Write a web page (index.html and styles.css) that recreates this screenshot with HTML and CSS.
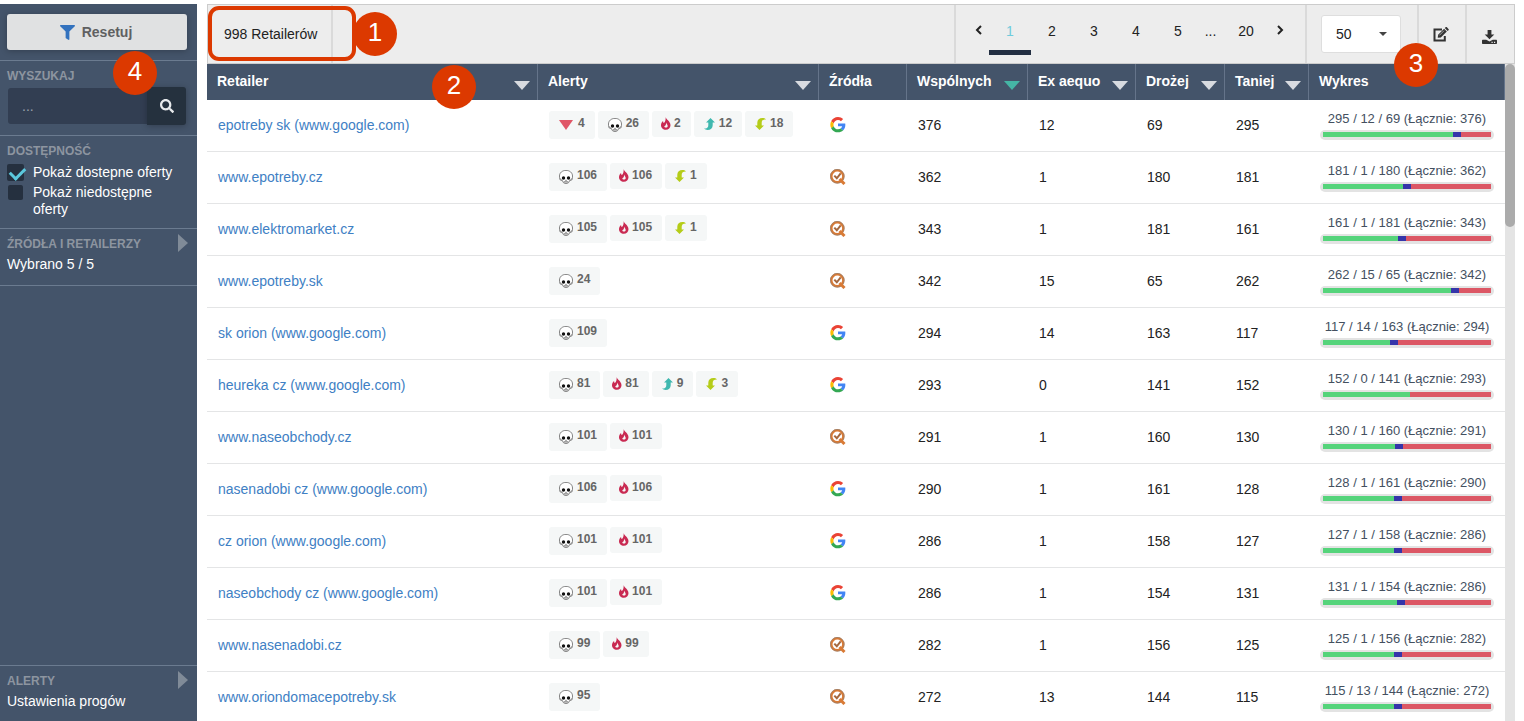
FILE: index.html
```html
<!DOCTYPE html>
<html lang="pl">
<head>
  <meta charset="utf-8">
  <title>Retailerzy</title>
  <link rel="stylesheet" href="styles.css">
</head>
<body>
  <svg class="sprite" aria-hidden="true">
    <symbol id="i-skull" viewBox="0 0 14 14">
      <path d="M7 .4C3.200.4.5 2.800.5 6c0 1.700.1 3.300.9 4.100.5.5 1.800.2 2.300.8.4.5.2 1.300.7 1.700.7.6 1.600.9 2.600.9s1.900-.3 2.600-.9c.5-.4.3-1.200.7-1.700.5-.6 1.800-.3 2.300-.8.8-.8.9-2.400.9-4.100C13.500 2.800 10.800.4 7 .4z" fill="#fff" stroke="#666" stroke-width=".8"/>
      <path d="M1.200 8.300c.2 1.300.8 1.700 2.300 1.800M12.800 8.300c-.2 1.300-.8 1.700-2.300 1.800" fill="none" stroke="#777" stroke-width=".9"/>
      <circle cx="4.500" cy="8" r="1.700" fill="#111"/>
      <circle cx="9.500" cy="8" r="1.700" fill="#111"/>
      <path d="M6.300 10.700L7 9.400l.7 1.300z" fill="#111"/>
      <path d="M4.900 11.900h4.200" stroke="#555" stroke-width=".9"/>
    </symbol>
    <symbol id="i-drop" viewBox="0 0 14 14">
      <path d="M0 2h14L7 12z" fill="#e05667"/>
    </symbol>
    <symbol id="i-fire" viewBox="0 0 10 13">
      <path d="M4.600 0c.5 2.600 4.900 4.300 4.900 8.200 0 2.600-2 4.600-4.700 4.600S0 10.800 0 8.300c0-2 .9-3.400 2.100-4.400 0 1 .2 1.800.8 2.200C4.300 4.700 4.900 2.400 4.600 0z" fill="#c92a52"/>
      <path d="M5 5.500c.2 1.300 1.700 1.900 1.700 3.400 0 1-.8 1.700-1.800 1.700-.9 0-1.600-.5-1.600-1.400 1.300-.2 2-1.800 1.700-3.700z" fill="#f6f7f7"/>
    </symbol>
    <symbol id="i-up" viewBox="0 0 11 12">
      <path d="M6.500 0L11 4.500H8.700v2.700C8.700 10.400 6.600 12 3.600 12 2.200 12 .9 11.500 0 10.600c2.800.1 4.300-1 4.300-3.400V4.500H2z" fill="#3fb8af"/>
    </symbol>
    <symbol id="i-down" viewBox="0 0 11 12">
      <path d="M4.500 12L0 7.500h2.300V4.800C2.300 1.600 4.400 0 7.400 0c1.400 0 2.700.5 3.600 1.400-2.800-.1-4.300 1-4.300 3.400v2.700H9z" fill="#b5cc18"/>
    </symbol>
    <symbol id="i-google" viewBox="-1 0 50 50">
      <path fill="#ea4335" d="M24 9.500c3.540 0 6.710 1.220 9.210 3.600l6.850-6.850C35.900 2.380 30.470 0 24 0 14.620 0 6.510 5.380 2.560 13.220l7.980 6.190C12.430 13.720 17.740 9.500 24 9.500z"/>
      <path fill="#4285f4" d="M46.980 24.550c0-1.570-.15-3.090-.38-4.550H24v9.020h12.940c-.58 2.960-2.260 5.480-4.780 7.180l7.730 6c4.510-4.180 7.090-10.360 7.090-17.650z"/>
      <path fill="#fbbc05" d="M10.530 28.590c-.48-1.450-.76-2.990-.76-4.590s.27-3.140.76-4.590l-7.980-6.190C.92 16.460 0 20.120 0 24c0 3.880.92 7.540 2.560 10.780l7.970-6.190z"/>
      <path fill="#34a853" d="M24 48c6.480 0 11.930-2.130 15.890-5.810l-7.730-6c-2.150 1.450-4.920 2.300-8.160 2.300-6.260 0-11.570-4.220-13.470-9.910l-7.980 6.190C6.510 42.620 14.620 48 24 48z"/>
    </symbol>
    <symbol id="i-lens" viewBox="0 0 16 16">
      <circle cx="7.300" cy="7.300" r="6" fill="none" stroke="#d97a35" stroke-width="2.400"/>
      <circle cx="7.300" cy="7.300" r="6.900" fill="none" stroke="#8d8178" stroke-width=".7"/>
      <path d="M4.300 6.600l2.500 2.700 3.900-5" fill="none" stroke="#a5683f" stroke-width="2"/>
      <path d="M9.500 10l5 5" stroke="#d97a35" stroke-width="3"/>
    </symbol>
  </svg>

  <aside class="sidebar">
    <section class="panel panel-reset">
      <button class="reset-btn" type="button">
        <svg width="15" height="15" viewBox="0 0 512 512"><path fill="#3372be" d="M487.976 0H24.028C2.710 0-8.047 25.866 7.058 40.971L192 225.941V432c0 7.831 3.821 15.170 10.237 19.662l80 55.980C298.020 518.690 320 507.493 320 487.980V225.941l184.947-184.970C520.021 25.896 509.338 0 487.976 0z"/></svg>
        Resetuj
      </button>
    </section>
    <section class="panel">
      <label class="panel-title" for="search">WYSZUKAJ</label>
      <div class="search">
        <input type="text" id="search" placeholder="...">
        <button type="button" aria-label="Szukaj">
          <svg width="14" height="14" viewBox="0 0 512 512"><path fill="#e8eaec" d="M505 442.700L405.300 343c-4.500-4.500-10.600-7-17-7H372c27.600-35.300 44-79.700 44-128C416 93.100 322.900 0 208 0S0 93.100 0 208s93.100 208 208 208c48.300 0 92.700-16.400 128-44v16.300c0 6.400 2.500 12.500 7 17l99.700 99.700c9.400 9.400 24.600 9.400 33.900 0l28.300-28.300c9.400-9.400 9.400-24.600.1-34zM208 336c-70.700 0-128-57.200-128-128 0-70.700 57.200-128 128-128 70.700 0 128 57.200 128 128 0 70.700-57.200 128-128 128z"/></svg>
        </button>
      </div>
    </section>
    <section class="panel">
      <h2 class="panel-title">DOSTĘPNOŚĆ</h2>
      <div class="checks">
        <label class="check"><input type="checkbox" checked> <span>Pokaż dostepne oferty</span></label>
        <label class="check"><input type="checkbox"> <span>Pokaż niedostępne oferty</span></label>
      </div>
    </section>
    <section class="panel panel-link">
      <h2 class="panel-title">ŹRÓDŁA I RETAILERZY</h2>
      <p>Wybrano 5 / 5</p>
      <button class="expand" type="button" aria-label="Rozwiń źródła"></button>
    </section>
    <section class="panel panel-link panel-bottom">
      <h2 class="panel-title">ALERTY</h2>
      <p>Ustawienia progów</p>
      <button class="expand" type="button" aria-label="Rozwiń alerty"></button>
    </section>
    <span class="marker marker-4">4</span>
  </aside>

  <main class="content">
    <header class="toolbar">
      <div class="tool count">998 Retailerów</div>
      <nav class="tool pages">
        <button class="step" type="button" aria-label="Poprzednia">
          <svg width="8" height="10" viewBox="0 0 8 10"><path d="M6 1L2 5l4 4" fill="none" stroke="#222" stroke-width="2"/></svg>
        </button>
        <a href="#" class="current">1</a>
        <a href="#">2</a>
        <a href="#">3</a>
        <a href="#">4</a>
        <a href="#">5</a>
        <span class="dots">...</span>
        <a href="#" class="last">20</a>
        <button class="step" type="button" aria-label="Następna">
          <svg width="8" height="10" viewBox="0 0 8 10"><path d="M2 1l4 4-4 4" fill="none" stroke="#222" stroke-width="2"/></svg>
        </button>
      </nav>
      <div class="tool per-page">
        <select aria-label="Wierszy na stronę">
          <option>50</option>
          <option>100</option>
        </select>
        <svg width="8" height="4" viewBox="0 0 8 4"><path d="M0 0h8L4 4z" fill="#444"/></svg>
      </div>
      <button class="tool icon-btn" type="button" aria-label="Edytuj">
        <svg width="16" height="15" viewBox="0 0 16 15">
          <path d="M9 2.500H1.500v11h10.300V9" fill="none" stroke="#333" stroke-width="2"/>
          <path d="M4.700 10.700l.4-3 6-6 2.700 2.700-6 6z" fill="#333"/>
          <path d="M11.800 1l.8-.7c.4-.4.9-.4 1.300 0l1.600 1.600c.4.4.4.9 0 1.300l-.9.700z" fill="#333"/>
          <path d="M6.300 8.400l4.700-4.700" stroke="#ededed" stroke-width=".6"/>
        </svg>
      </button>
      <button class="tool icon-btn icon-btn-low" type="button" aria-label="Pobierz">
        <svg width="15" height="14" viewBox="0 0 15 14">
          <path d="M5.600 0h3.800v4.500h2.900L7.500 9.300 2.700 4.500h2.900z" fill="#333"/>
          <path d="M1 9.700h3.200l3.300 1.900 3.300-1.900H14c.6 0 1 .4 1 1V13c0 .6-.4 1-1 1H1c-.6 0-1-.4-1-1v-2.300c0-.6.4-1 1-1z" fill="#333"/>
          <path d="M9.500 12.300h1.200M12 12.300h1.200" stroke="#ededed" stroke-width="1.200"/>
        </svg>
      </button>
      <span class="frame"></span>
      <span class="marker marker-1">1</span>
      <span class="marker marker-3">3</span>
    </header>

    <div class="table-area">
      <table class="retailers">
        <thead>
          <tr>
            <th>Retailer<button class="sort" type="button" aria-label="Sortuj"></button></th>
            <th class="col-alerts">Alerty<button class="sort" type="button" aria-label="Sortuj"></button></th>
            <th class="col-source">Źródła</th>
            <th class="col-common">Wspólnych<button class="sort active" type="button" aria-label="Sortuj"></button></th>
            <th class="col-equal">Ex aequo<button class="sort" type="button" aria-label="Sortuj"></button></th>
            <th class="col-dearer">Drożej<button class="sort" type="button" aria-label="Sortuj"></button></th>
            <th class="col-cheaper">Taniej<button class="sort" type="button" aria-label="Sortuj"></button></th>
            <th class="col-chart">Wykres</th>
          </tr>
        </thead>
        <tbody id="rows"></tbody>
      </table>
      <div class="scrollbar"><div class="thumb"></div></div>
      <span class="marker marker-2">2</span>
    </div>
  </main>

  <script>
    // name, alerts, source, common, equal, dearer, cheaper
    const retailers = [
      ['epotreby sk (www.google.com)', { drop: 4, skull: 26, fire: 2, up: 12, down: 18 }, 'google', 376, 12, 69, 295],
      ['www.epotreby.cz', { skull: 106, fire: 106, down: 1 }, 'lens', 362, 1, 180, 181],
      ['www.elektromarket.cz', { skull: 105, fire: 105, down: 1 }, 'lens', 343, 1, 181, 161],
      ['www.epotreby.sk', { skull: 24 }, 'lens', 342, 15, 65, 262],
      ['sk orion (www.google.com)', { skull: 109 }, 'google', 294, 14, 163, 117],
      ['heureka cz (www.google.com)', { skull: 81, fire: 81, up: 9, down: 3 }, 'google', 293, 0, 141, 152],
      ['www.naseobchody.cz', { skull: 101, fire: 101 }, 'lens', 291, 1, 160, 130],
      ['nasenadobi cz (www.google.com)', { skull: 106, fire: 106 }, 'google', 290, 1, 161, 128],
      ['cz orion (www.google.com)', { skull: 101, fire: 101 }, 'google', 286, 1, 158, 127],
      ['naseobchody cz (www.google.com)', { skull: 101, fire: 101 }, 'google', 286, 1, 154, 131],
      ['www.nasenadobi.cz', { skull: 99, fire: 99 }, 'lens', 282, 1, 156, 125],
      ['www.oriondomacepotreby.sk', { skull: 95 }, 'lens', 272, 13, 144, 115]
    ];

    const rows = document.getElementById('rows');

    function renderAlerts(alerts) {
      return Object.keys(alerts).map(type =>
        `<span class="alert alert-${type}"><svg><use href="#i-${type}"/></svg>${alerts[type]}</span>`
      ).join('');
    }

    function renderChart(cheaper, equal, dearer, common) {
      return `<div class="chart-label">${cheaper} / ${equal} / ${dearer} (Łącznie: ${common})</div>
        <div class="bar">
          <span class="bar-cheaper" style="flex-grow: ${cheaper}"></span>
          ${equal ? '<span class="bar-equal"></span>' : ''}
          <span class="bar-dearer" style="flex-grow: ${dearer}"></span>
        </div>`;
    }

    retailers.forEach(([name, alerts, source, common, equal, dearer, cheaper]) => {
      const row = document.createElement('tr');
      row.innerHTML = `<td><a href="#">${name}</a></td>
        <td class="media"><div class="alerts">${renderAlerts(alerts)}</div></td>
        <td class="media"><svg class="source"><use href="#i-${source}"/></svg></td>
        <td>${common}</td>
        <td>${equal}</td>
        <td>${dearer}</td>
        <td>${cheaper}</td>
        <td class="media chart">${renderChart(cheaper, equal, dearer, common)}</td>`;
      rows.appendChild(row);
    });
  </script>
</body>
</html>
```
FILE: styles.css
```css
* {
  box-sizing: border-box;
}

body {
  margin: 0;
  padding: 4px 9px 0 0;
  height: 100vh;
  display: flex;
  gap: 10px;
  overflow: hidden;
  font-family: "Liberation Sans", Arial, sans-serif;
  font-size: 14px;
  line-height: 17px;
  color: #222;
  background: #fff;
}

button,
input,
select {
  font-family: inherit;
  font-size: 14px;
  border: none;
  margin: 0;
  padding: 0;
}

button {
  cursor: pointer;
  background: none;
}

svg {
  display: block;
}

.sprite {
  position: absolute;
  width: 0;
  height: 0;
}

/* sidebar */

.sidebar {
  position: relative;
  display: flex;
  flex-direction: column;
  flex: none;
  width: 197px;
  background: #44546a;
  color: #fff;
}

.panel {
  position: relative;
  padding: 8px 10px 10px 7px;
  border-bottom: 1px solid #6b7b90;
}

.panel-reset {
  padding-top: 10px;
}

.panel-link {
  padding-bottom: 12px;
}

.panel-bottom {
  margin-top: auto;
  padding-bottom: 11px;
  border-top: 1px solid #6b7b90;
  border-bottom: none;
}

.panel-title {
  display: block;
  margin: 0;
  font-size: 12px;
  line-height: 14px;
  font-weight: bold;
  color: #8d95a0;
}

.panel p {
  margin: 5px 0 0;
}

.reset-btn {
  display: flex;
  align-items: center;
  justify-content: center;
  gap: 7px;
  width: 100%;
  height: 36px;
  padding-right: 2px;
  font-weight: bold;
  color: #5f6061;
  background: #e0e1e2;
  border-radius: 3px;
  box-shadow: 0 1px 6px rgba(0, 0, 0, 0.25);
}

.search {
  display: flex;
  align-items: center;
  margin: 4px 1px 0;
}

.search input {
  flex: 1;
  min-width: 0;
  width: 100%;
  height: 36px;
  padding: 0 14px;
  color: #fff;
  background: #323e52;
  border-radius: 3px 0 0 3px;
}

.search input::placeholder {
  color: #98a0aa;
}

.search button {
  display: flex;
  align-items: center;
  justify-content: center;
  flex: none;
  width: 39px;
  height: 38px;
  background: #25313e;
  border-radius: 0 3px 3px 0;
  box-shadow: 0 1px 6px rgba(0, 0, 0, 0.25);
}

.checks {
  display: flex;
  flex-direction: column;
  gap: 3px;
  margin-top: 6px;
}

.check {
  display: flex;
  gap: 9px;
}

.check input {
  appearance: none;
  position: relative;
  flex: none;
  width: 15px;
  height: 15px;
  margin: 1px;
  background: #25303f;
  border-radius: 2px;
}

.check input:checked {
  width: 17px;
  height: 17px;
  margin: 0;
}

.check input:checked::after {
  content: "";
  position: absolute;
  left: 3px;
  top: 3px;
  width: 12px;
  height: 7px;
  border: solid #5bc8dd;
  border-width: 0 0 3px 3px;
  transform: rotate(-45deg);
}

.expand {
  position: absolute;
  top: 5px;
  right: 9px;
  border: solid transparent;
  border-width: 9px 0 9px 10px;
  border-left-color: #808b98;
}

/* toolbar */

.content {
  flex: 1;
  min-width: 0;
  display: flex;
  flex-direction: column;
}

.toolbar {
  position: relative;
  z-index: 1;
  display: flex;
  height: 60px;
  background: #ededed;
  border: 1px solid #ccc;
}

.tool {
  display: flex;
  align-items: center;
  border-left: 2px solid #dadada;
}

.count {
  padding: 0 14px 0 16px;
  border-left: none;
  border-right: 2px solid #dadada;
}

.pages {
  align-items: flex-start;
  margin-left: auto;
  padding: 0 15px 0 13px;
}

.pages a,
.pages .dots,
.step {
  width: 42px;
  height: 50px;
  line-height: 52px;
  text-align: center;
  color: #222;
  text-decoration: none;
}

.pages .step {
  display: flex;
  align-items: center;
  justify-content: center;
  width: 20px;
}

.pages .dots {
  width: 23px;
}

.pages .last {
  width: 48px;
}

.pages .current {
  color: #6fcbdc;
  border-bottom: 5px solid #232f42;
}

.per-page {
  position: relative;
  padding: 0 16px 0 14px;
}

.per-page select {
  appearance: none;
  width: 80px;
  height: 38px;
  padding: 0 14px;
  color: #222;
  background: #fff;
  border: 1px solid #dedede;
  border-radius: 3px;
}

.per-page svg {
  position: absolute;
  right: 30px;
  pointer-events: none;
}

.icon-btn {
  justify-content: center;
  width: 48px;
  padding-right: 2px;
  border-left: 2px solid #dadada;
}

.icon-btn-low {
  width: 49px;
  padding-top: 6px;
}

/* table */

.table-area {
  position: relative;
  display: flex;
  align-items: flex-start;
  flex: 1;
  min-height: 0;
}

.retailers {
  flex: 1;
  width: 100%;
  table-layout: fixed;
  border-spacing: 0;
}

.retailers th {
  position: relative;
  height: 36px;
  padding: 0 10px 2px;
  text-align: left;
  color: #fff;
  background: #44546a;
  box-shadow: inset -1px 0 #65748a;
}

.col-alerts { width: 281px; }
.col-source { width: 88px; }
.col-common { width: 121px; }
.col-equal { width: 108px; }
.col-dearer { width: 89px; }
.col-cheaper { width: 84px; }
.col-chart { width: 196px; }

.sort {
  position: absolute;
  top: 17px;
  right: 8px;
  border: solid transparent;
  border-width: 9px 8px 0;
  border-top-color: #d8dbe0;
}

.sort.active {
  border-top-color: #45b5a5;
}

.retailers td {
  height: 52px;
  padding: 0 0 0 11px;
  border-bottom: 1px solid #e4e5e6;
}

.retailers .media {
  padding-bottom: 2px;
}

.retailers a {
  color: #4080c4;
  text-decoration: none;
}

.alerts {
  display: flex;
  align-items: flex-start;
  gap: 3px;
  height: 28px;
}

.alert {
  display: flex;
  align-items: center;
  gap: 4px;
  height: 26px;
  padding: 0 10px;
  font-size: 12px;
  font-weight: bold;
  color: #666;
  background: #f5f7f7;
  border-radius: 3px;
}

.alert svg {
  width: 14px;
  height: 14px;
}

.alert-skull,
.alert-drop {
  height: 28px;
  padding-bottom: 2px;
}

.alert-drop {
  gap: 5px;
}

.alert-skull svg,
.alert-drop svg {
  margin-top: 2px;
}

.alert-fire {
  gap: 3px;
  padding-left: 9px;
}

.alert-fire svg {
  width: 10px;
  height: 13px;
}

.alert-up svg,
.alert-down svg {
  width: 11px;
  height: 12px;
}

.source {
  width: 16px;
  height: 16px;
}

.retailers .chart {
  padding-right: 11px;
}

.chart-label {
  font-size: 13px;
  text-align: center;
  color: #44505f;
}

.bar {
  display: flex;
  height: 10px;
  margin-top: 3px;
  padding: 2px 3px 3px;
  background: #e3e3e3;
  border-radius: 5px;
}

.bar-cheaper {
  background: #55d47b;
}

.bar-equal {
  flex: 0 0 8px;
  background: #3535aa;
}

.bar-dearer {
  background: #dc5765;
}

.scrollbar {
  align-self: stretch;
  width: 10px;
  background: #e4e4e4;
}

.thumb {
  height: 163px;
  background: #ababab;
  border-radius: 5px;
}

/* numbered markers */

.marker {
  position: absolute;
  z-index: 2;
  width: 44px;
  height: 44px;
  line-height: 40px;
  font-size: 26px;
  text-align: center;
  color: #fff;
  background: #dc3900;
  border-radius: 50%;
}

.marker-1 {
  left: 145px;
  top: 7px;
}

.marker-2 {
  left: 225px;
  top: 1px;
}

.marker-3 {
  right: 76px;
  top: 38px;
}

.marker-4 {
  left: 113px;
  top: 47px;
}

.frame {
  position: absolute;
  left: 0;
  top: 1px;
  width: 148px;
  height: 55px;
  border: 4px solid #dc3900;
  border-radius: 11px;
}
```
